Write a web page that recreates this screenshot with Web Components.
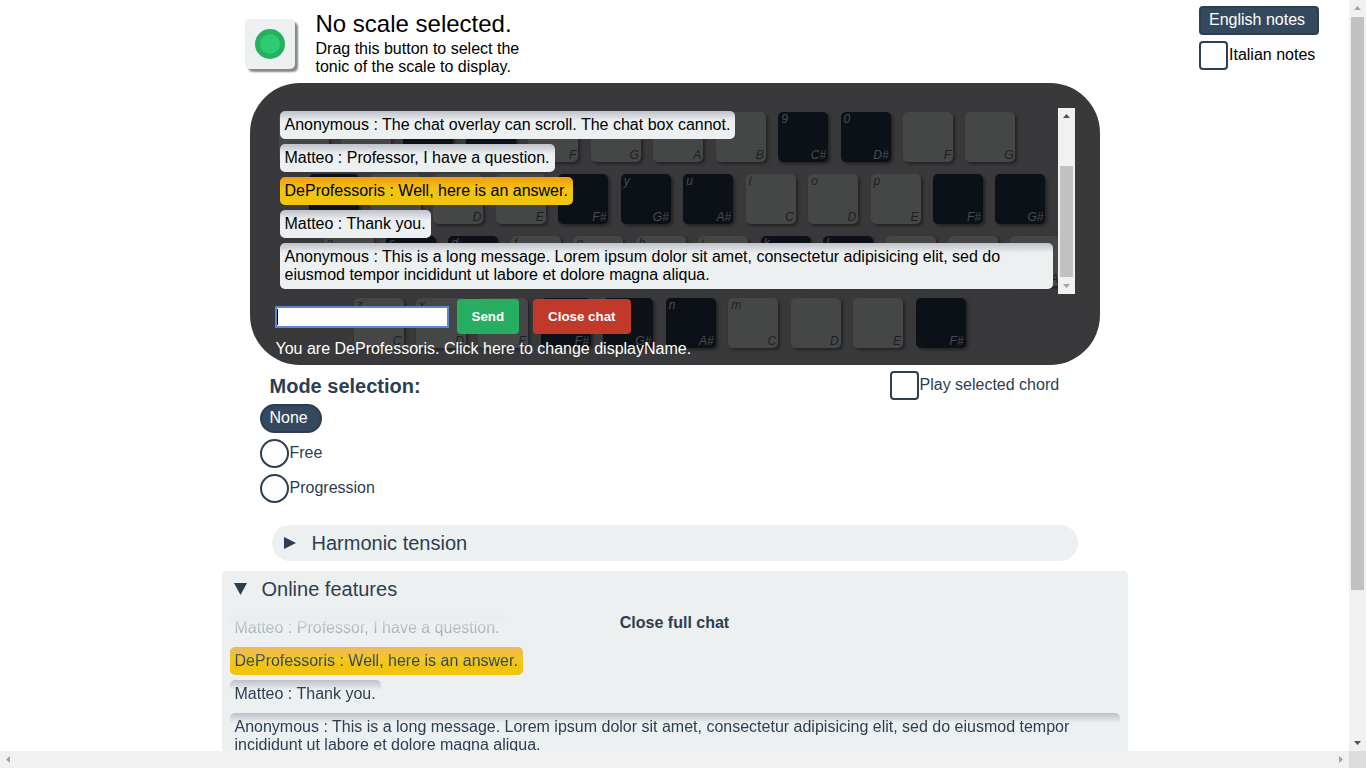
<!DOCTYPE html>
<html lang="en">
<head>
<meta charset="utf-8">
<meta name="viewport" content="width=device-width, initial-scale=1">
<title>Scale keyboard</title>
<style>
  body { margin: 0; font: 16px/18px "Liberation Sans", Arial, sans-serif; color: #2c3e50; background: #fff; }
</style>
</head>
<body>
<scroll-frame>
  <page-header></page-header>
  <key-board></key-board>
  <mode-panel></mode-panel>
  <fold-out label="Harmonic tension"></fold-out>
  <fold-out label="Online features" open>
    <full-chat>
      <chat-message>Matteo : Professor, I have a question.</chat-message>
      <chat-message own>DeProfessoris : Well, here is an answer.</chat-message>
      <chat-message>Matteo : Thank you.</chat-message>
      <chat-message>Anonymous : This is a long message. Lorem ipsum dolor sit amet, consectetur adipisicing elit, sed do eiusmod tempor incididunt ut labore et dolore magna aliqua.</chat-message>
    </full-chat>
  </fold-out>
</scroll-frame>

<script>
const define = (name, render) => customElements.define(name, class extends HTMLElement {
  constructor() {
    super();
    this.attachShadow({ mode: 'open' });
  }
  connectedCallback() {
    this.shadowRoot.innerHTML = '<style>* { box-sizing: border-box; }</style>' + render(this);
  }
});

// Scroll bar with two arrows; attributes: dir, thumb (space before, thumb, space after), start, end (active arrows)
define('scroll-bar', el => {
  const across = el.getAttribute('dir') === 'x';
  const parts = (el.getAttribute('thumb') || '').split(' ');
  const tone = a => el.hasAttribute(a) ? '#505050' : '#a3a3a3';
  const first = across ? 'M6 8.5 10 5v7z' : 'M8.5 6 5 10h7z';
  const last = across ? 'M11 8.5 7 5v7z' : 'M8.5 11 5 7h7z';
  return `
  <style>
    :host { display: flex; flex-direction: ${across ? 'row' : 'column'}; background: #f1f1f1; }
    svg { flex: none; width: 17px; height: 17px; display: block; }
    .track { flex: 1; display: grid; min-height: 0; ${parts[1] ? `grid-template-rows: ${parts[0]}fr ${parts[1]}fr ${parts[2]}fr;` : ''} }
    .thumb { grid-row: 2; margin: 0 2px; background: #c1c1c1; }
  </style>
  <svg viewBox="0 0 17 17"><path fill="${tone('start')}" d="${first}"/></svg>
  <div class="track">${parts[1] ? '<div class="thumb"></div>' : ''}</div>
  <svg viewBox="0 0 17 17"><path fill="${tone('end')}" d="${last}"/></svg>`;
});

define('scroll-frame', () => `
  <style>
    :host { display: grid; height: 100vh; grid-template: minmax(0, 1fr) 17px / minmax(0, 1fr) 17px; overflow: hidden; }
    main { overflow: hidden; }
    .corner { background: #dcdcdc; }
  </style>
  <main><slot></slot></main>
  <scroll-bar dir="y" thumb="0 573 144" end></scroll-bar>
  <scroll-bar dir="x"></scroll-bar>
  <div class="corner"></div>`);

// Tick box or radio; when checked the box grows to hold its label
define('toggle-choice', el => {
  const type = el.getAttribute('type') || 'checkbox';
  const radius = type === 'radio' ? 15 : 4;
  const checked = el.hasAttribute('checked');
  return `
  <style>
    :host { display: block; }
    label { display: grid; width: max-content; height: 29px; grid-template-columns: 29px auto; line-height: 27px; column-gap: 1px; }
    input { appearance: none; margin: 0; width: 100%; height: 29px; border: 2px solid #2c3e50; border-radius: ${radius}px; background: #fff; }
    label.on { grid-template-columns: auto; color: #fff; }
    .on input, .on span { grid-area: 1 / 1; }
    .on input { background: #34495e; }
    .on span { padding: 0 14px 0 10px; z-index: 1; }
  </style>
  <label class="${checked ? 'on' : ''}"><input type="${type}" ${checked ? 'checked' : ''}><span><slot></slot></span></label>`;
});

define('page-header', () => `
  <style>
    :host { display: grid; grid-template-columns: minmax(0, 1fr) minmax(0, 860px) minmax(0, 1fr); height: 83px; color: #000; }
    .scale { grid-column: 2; display: flex; gap: 21px; }
    button { flex: none; display: grid; place-items: center; width: 50px; height: 50px; margin: 19px 0 0; padding: 0; border: 0; border-radius: 5px; background: #ecf0f1; box-shadow: 3px 3px 2px #888; }
    i { width: 30px; height: 30px; border: 5px solid #27ae60; border-radius: 50%; background: #2ecc71; }
    h1 { margin: 10px 0 0; font-size: 24px; font-weight: 400; line-height: 28px; }
    p { margin: 2px 0 0; max-width: 230px; }
    .notes { justify-self: end; width: 120px; margin: 6px 30px 0 0; display: grid; gap: 6px; align-content: start; }
  </style>
  <div class="scale">
    <button aria-label="Tonic"><i></i></button>
    <div><h1>No scale selected.</h1><p>Drag this button to select the tonic of the scale to display.</p></div>
  </div>
  <div class="notes">
    <toggle-choice checked>English notes</toggle-choice>
    <toggle-choice>Italian notes</toggle-choice>
  </div>`);

define('piano-key', el => `
  <style>
    :host { display: inline-flex; flex-direction: column; justify-content: space-between; vertical-align: top; width: 50px; height: 50px; margin: 4px;
      padding: 0 2px 0 3px; box-sizing: border-box; border-radius: 5px; background: #454746; color: #1c2022; box-shadow: 2px 2px 3px #222325;
      font-size: 12px; font-style: italic; line-height: 14px; }
    :host([black]) { background: #0c1118; color: #4a4c4d; }
    .note { text-align: right; }
  </style>
  <span>${el.getAttribute('key') || ''}</span><span class="note">${el.getAttribute('note') || ''}</span>`);

// Each key is "letter:note"; a leading * makes it black
const rows = [
  ': : *: *: :F :G :A :B *9:C# *0:D# :F :G',
  '*: : :D :E *:F# *y:G# *u:A# i:C o:D p:E *:F# *:G#',
  'a: *s: *d: f: g: h: j: *k: *l: : : :A',
  'z:C x:D :E *:F# *:G# *n:A# m:C :D :E *:F#'
];
define('key-board', () => `
  <style>
    :host { display: grid; grid-template-columns: minmax(0, 1fr); max-width: 850px; margin: 0 auto; background: #39393b; border-radius: 50px; overflow: hidden; }
    .keys { grid-area: 1 / 1; padding: 25px 0 9px 25px; }
    .row { height: 62px; white-space: nowrap; }
    .row:nth-child(2) { padding-left: 30px; }
    .row:nth-child(3) { padding-left: 45px; }
    .row:nth-child(4) { padding-left: 75px; }
    chat-overlay { grid-area: 1 / 1; z-index: 1; }
  </style>
  <div class="keys">${rows.map(r => `<div class="row">${r.split(' ').map(k => {
    const [key, note] = k.replace('*', '').split(':');
    return `<piano-key ${k[0] === '*' ? 'black' : ''} key="${key}" note="${note}"></piano-key>`;
  }).join(' ')}</div>`).join('')}</div>
  <chat-overlay></chat-overlay>`);

define('chat-message', () => `
  <style>
    :host { display: block; width: fit-content; padding: 5px; border-radius: 5px; background: linear-gradient(#bdc1c8, #ecf0f1 10px); }
    :host([own]) { background: linear-gradient(#f39c12, #f1c40f 12px); }
  </style><slot></slot>`);

define('chat-overlay', () => `
  <style>
    :host { display: block; padding: 25px 25px 0; color: #fff; }
    .log { display: grid; grid-template-columns: minmax(0, 1fr) 17px; height: 186px; color: #000; }
    .list { display: grid; gap: 5px; align-content: start; padding: 3px 5px; }
    form { display: flex; align-items: center; margin: 5px 0; height: 35px; }
    input { width: 174px; height: 22px; margin: 0 8px 0 0; padding: 1px; border: 2px solid #5b86d0; outline: 0; caret-color: transparent;
      background: linear-gradient(#000, #000) 0 1px / 1px 16px no-repeat #fff; }
    button { height: 35px; margin: 0 14px 0 0; padding: 0 15px; border: 0; border-radius: 4px; color: #fff; font-family: inherit; font-weight: 700; background: #27ae60; }
    .close { background: #c0392b; }
    a { display: block; padding: 1px; color: #fff; text-decoration: none; }
  </style>
  <div class="log">
    <div class="list">
      <chat-message>Anonymous : The chat overlay can scroll. The chat box cannot.</chat-message>
      <chat-message>Matteo : Professor, I have a question.</chat-message>
      <chat-message own>DeProfessoris : Well, here is an answer.</chat-message>
      <chat-message>Matteo : Thank you.</chat-message>
      <chat-message>Anonymous : This is a long message. Lorem ipsum dolor sit amet, consectetur adipisicing elit, sed do eiusmod tempor incididunt ut labore et dolore magna aliqua.</chat-message>
    </div>
    <scroll-bar dir="y" thumb="41 111 0" start></scroll-bar>
  </div>
  <form>
    <input type="text" aria-label="Message">
    <button type="button">Send</button><button type="button" class="close">Close chat</button>
  </form>
  <a href="#name">You are DeProfessoris. Click here to change displayName.</a>`);

define('mode-panel', () => `
  <style>
    :host { display: flex; justify-content: space-between; max-width: 830px; margin: 0 auto 22px; }
    h2 { margin: 0; padding: 10px 0 6px 10px; font-size: 20px; line-height: 23px; }
    .modes { display: grid; gap: 6px; }
    .chord { width: 200px; padding-top: 6px; }
  </style>
  <div>
    <h2>Mode selection:</h2>
    <div class="modes">
      <toggle-choice type="radio" checked>None</toggle-choice>
      <toggle-choice type="radio">Free</toggle-choice>
      <toggle-choice type="radio">Progression</toggle-choice>
    </div>
  </div>
  <toggle-choice class="chord">Play selected chord</toggle-choice>`);

define('fold-out', el => {
  const open = el.hasAttribute('open');
  return `
  <style>
    :host { display: block; max-width: ${open ? 906 : 806}px; margin: 0 auto 10px; }
    details { background: #ecf0f1; border-radius: ${open ? 5 : 18}px; }
    summary { display: flex; align-items: center; gap: 15px; height: 36px; padding-left: 12px; list-style: none; font-size: 20px; line-height: 23px; }
    svg { width: 13px; height: 12px; }
  </style>
  <details ${open ? 'open' : ''}>
    <summary><svg viewBox="0 0 13 12"><path fill="#2c3e50" d="${open ? 'M0 0h13L6.500 12z' : 'M0 0v12l12-6z'}"/></svg>${el.getAttribute('label')}</summary>
    <slot></slot>
  </details>`;
});

define('full-chat', () => `
  <style>
    :host { display: grid; grid-template-columns: minmax(0, 1fr); padding: 7px 8px; }
    .list { grid-area: 1 / 1; display: grid; gap: 5px; mask-image: linear-gradient(transparent, #000 50px); }
    button { grid-area: 1 / 1; place-self: start center; padding: 0; border: 0; background: none; color: inherit; font: inherit; font-weight: 700; z-index: 1; }
  </style>
  <div class="list"><slot></slot></div>
  <button type="button">Close full chat</button>`);
</script>
</body>
</html>
